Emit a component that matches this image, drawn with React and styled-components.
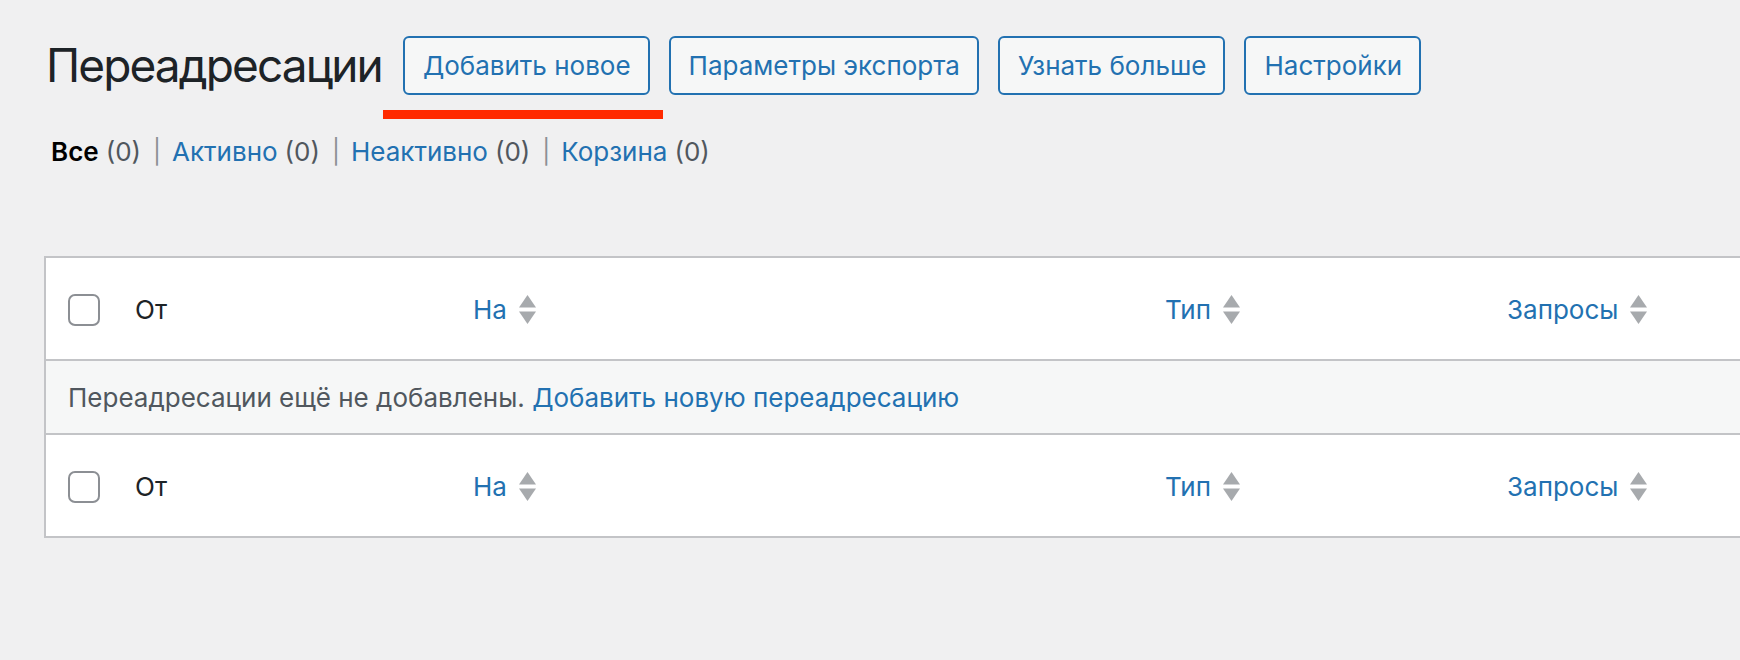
import React from "react";
import styled, { createGlobalStyle } from "styled-components";

const Global = createGlobalStyle`
  html, body {
    margin: 0;
    padding: 0;
    background: #f0f0f1;
    overflow: hidden;
  }
  body {
    font-family: Inter, "Noto Sans", "Liberation Sans", sans-serif;
    color: #3c434a;
    -webkit-font-smoothing: antialiased;
  }
`;

const Page = styled.div`
  position: relative;
  padding: 36px 0 0 44px;
  width: 1740px;
  box-sizing: border-box;
`;

const HeaderBar = styled.div`
  display: flex;
  align-items: center;
  gap: 19px;
  padding-left: 2px;
`;

const Title = styled.h1`
  margin: 0 2px 0 0;
  font-size: 46px;
  font-weight: 400;
  line-height: 59px;
  color: #1d2327;
  letter-spacing: -1.9px;
`;

const ActionButton = styled.a`
  display: inline-flex;
  align-items: center;
  height: 59px;
  box-sizing: border-box;
  padding: 0 17px 0 18px;
  border: 2px solid #2271b1;
  border-radius: 6px;
  background: #f6f7f7;
  color: #2271b1;
  font-size: 26px;
  line-height: 55px;
  text-decoration: none;
  white-space: nowrap;
`;

const Marker = styled.div`
  position: absolute;
  left: 383px;
  top: 110px;
  width: 280px;
  height: 9px;
  background: #ff2a00;
`;

const Filters = styled.ul`
  display: flex;
  align-items: center;
  margin: 39px 0 0 7px;
  padding: 0;
  list-style: none;
  font-size: 26px;
  line-height: 36px;
`;

const FilterItem = styled.li`
  display: flex;
  align-items: center;
  white-space: nowrap;
`;

const FilterLabel = styled.span`
  color: ${(p) => (p.$current ? "#000" : "#2271b1")};
  font-weight: ${(p) => (p.$current ? 600 : 400)};
`;

const Count = styled.span`
  color: #50575e;
  margin-left: 7px;
`;

const Sep = styled.span`
  color: #8c8f94;
  margin: 0 11px 0 12px;
  font-size: 24px;
`;

const Table = styled.div`
  margin-top: 86px;
  width: 1760px;
  border: 2px solid #c3c4c7;
  background: #fff;
`;

const HeadRow = styled.div`
  display: grid;
  grid-template-columns: 89px 338px 692px 342px 1fr;
  align-items: center;
  height: 103px;
  padding-top: 2px;
  box-sizing: border-box;
  border-bottom: ${(p) => (p.$bottom ? "2px solid #c3c4c7" : "none")};
  border-top: ${(p) => (p.$top ? "2px solid #c3c4c7" : "none")};
`;

const CheckCell = styled.div`
  display: flex;
  align-items: center;
  padding-left: 22px;
`;

const Checkbox = styled.span`
  display: block;
  width: 32px;
  height: 32px;
  box-sizing: border-box;
  border: 2px solid #8c8f94;
  border-radius: 7px;
  background: #fff;
`;

const HeadCell = styled.div`
  display: flex;
  align-items: center;
  font-size: 26px;
  line-height: 36px;
  color: ${(p) => (p.$link ? "#2271b1" : "#1d2327")};
  white-space: nowrap;
`;

const SortIcon = styled.svg`
  margin-left: 12px;
  flex: none;
`;

const EmptyRow = styled.div`
  display: flex;
  align-items: center;
  height: 72px;
  padding-left: 22px;
  background: #f6f7f7;
  font-size: 26px;
  color: #50575e;
  white-space: pre;
`;

const EmptyLink = styled.a`
  color: #2271b1;
  text-decoration: none;
`;

const Sort = () => (
  <SortIcon width="17" height="30" viewBox="0 0 17 30">
    <polygon points="8.5,0 17,12.5 0,12.5" fill="#a7aaad" />
    <polygon points="0,16.5 17,16.5 8.5,29" fill="#a7aaad" />
  </SortIcon>
);

const Columns = ({ top, bottom }) => (
  <HeadRow $top={top} $bottom={bottom}>
    <CheckCell>
      <Checkbox />
    </CheckCell>
    <HeadCell>От</HeadCell>
    <HeadCell $link>
      На
      <Sort />
    </HeadCell>
    <HeadCell $link>
      Тип
      <Sort />
    </HeadCell>
    <HeadCell $link>
      Запросы
      <Sort />
    </HeadCell>
  </HeadRow>
);

const filters = [
  { label: "Все", current: true },
  { label: "Активно" },
  { label: "Неактивно" },
  { label: "Корзина" },
];

export default function App() {
  return (
    <>
      <Global />
      <Page>
        <HeaderBar>
          <Title>Переадресации</Title>
          <ActionButton href="#">Добавить новое</ActionButton>
          <ActionButton href="#">Параметры экспорта</ActionButton>
          <ActionButton href="#">Узнать больше</ActionButton>
          <ActionButton href="#">Настройки</ActionButton>
        </HeaderBar>
        <Marker />
        <Filters>
          {filters.map((f, i) => (
            <FilterItem key={f.label}>
              <FilterLabel $current={f.current}>{f.label}</FilterLabel>
              <Count>(0)</Count>
              {i < filters.length - 1 && <Sep>|</Sep>}
            </FilterItem>
          ))}
        </Filters>
        <Table>
          <Columns bottom />
          <EmptyRow>
            {"Переадресации ещё не добавлены. "}
            <EmptyLink href="#">Добавить новую переадресацию</EmptyLink>
          </EmptyRow>
          <Columns top />
        </Table>
      </Page>
    </>
  );
}
